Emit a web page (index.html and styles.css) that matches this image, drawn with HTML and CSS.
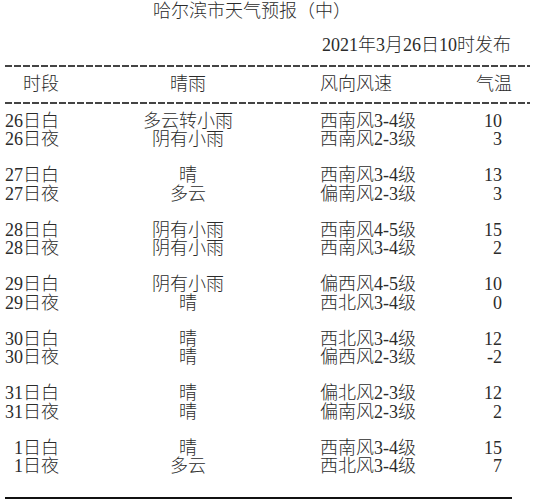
FILE: index.html
```html
<!DOCTYPE html>
<html lang="zh">
<head>
<meta charset="utf-8">
<link rel="stylesheet" href="styles.css">
</head>
<body>
<div class="sheet">
  <div class="title">哈尔滨市天气预报（中）</div>
  <div class="issued">2021年3月26日10时发布</div>
  <div class="dash"></div>
  <div class="row head">
    <span class="c1">时段</span><span class="c2">晴雨</span><span class="c3">风向风速</span><span class="c4">气温</span>
  </div>
  <div class="dash"></div>
  <div class="groups">
    <div class="group">
      <div class="row"><span class="c1">26日白</span><span class="c2">多云转小雨</span><span class="c3">西南风3-4级</span><span class="c4">10</span></div>
      <div class="row"><span class="c1">26日夜</span><span class="c2">阴有小雨</span><span class="c3">西南风2-3级</span><span class="c4">3</span></div>
    </div>
    <div class="group">
      <div class="row"><span class="c1">27日白</span><span class="c2">晴</span><span class="c3">西南风3-4级</span><span class="c4">13</span></div>
      <div class="row"><span class="c1">27日夜</span><span class="c2">多云</span><span class="c3">偏南风2-3级</span><span class="c4">3</span></div>
    </div>
    <div class="group">
      <div class="row"><span class="c1">28日白</span><span class="c2">阴有小雨</span><span class="c3">西南风4-5级</span><span class="c4">15</span></div>
      <div class="row"><span class="c1">28日夜</span><span class="c2">阴有小雨</span><span class="c3">西南风3-4级</span><span class="c4">2</span></div>
    </div>
    <div class="group">
      <div class="row"><span class="c1">29日白</span><span class="c2">阴有小雨</span><span class="c3">偏西风4-5级</span><span class="c4">10</span></div>
      <div class="row"><span class="c1">29日夜</span><span class="c2">晴</span><span class="c3">西北风3-4级</span><span class="c4">0</span></div>
    </div>
    <div class="group">
      <div class="row"><span class="c1">30日白</span><span class="c2">晴</span><span class="c3">西北风3-4级</span><span class="c4">12</span></div>
      <div class="row"><span class="c1">30日夜</span><span class="c2">晴</span><span class="c3">偏西风2-3级</span><span class="c4">-2</span></div>
    </div>
    <div class="group">
      <div class="row"><span class="c1">31日白</span><span class="c2">晴</span><span class="c3">偏北风2-3级</span><span class="c4">12</span></div>
      <div class="row"><span class="c1">31日夜</span><span class="c2">晴</span><span class="c3">偏南风2-3级</span><span class="c4">2</span></div>
    </div>
    <div class="group">
      <div class="row"><span class="c1">1日白</span><span class="c2">晴</span><span class="c3">西南风3-4级</span><span class="c4">15</span></div>
      <div class="row"><span class="c1">1日夜</span><span class="c2">多云</span><span class="c3">西北风3-4级</span><span class="c4">7</span></div>
    </div>
  </div>
  <div class="rule"></div>
</div>
</body>
</html>
```

FILE: styles.css
```css
* { box-sizing: border-box; }
html, body { margin: 0; padding: 0; background: #ffffff; }
body {
  font-family: "Liberation Serif", "Noto Sans CJK SC", serif;
  font-size: 18px;
  font-weight: 300;
  color: #2b2b2b;
}
.sheet {
  width: 533px;
  height: 500px;
  overflow: hidden;
  display: flex;
  flex-direction: column;
}
.title {
  height: 23px;
  line-height: 23px;
  padding-left: 153px;
  white-space: nowrap;
}
.issued {
  margin-top: 11px;
  height: 23px;
  line-height: 23px;
  text-align: right;
  padding-right: 22px;
  white-space: nowrap;
}
.dash {
  margin-left: 5px;
  width: 525px;
  height: 2px;
  background: repeating-linear-gradient(90deg, #444444 0 7px, transparent 7px 9px);
}
.issued + .dash { margin-top: 8px; }
.row {
  display: grid;
  grid-template-columns: 60px 256px 124px 62px;
  height: 18.2px;
  line-height: 18.2px;
  white-space: nowrap;
}
.row.head {
  height: 35px;
  line-height: 35px;
  grid-template-columns: 60px 256px 124px 72px;
}
.c1 { text-align: right; padding-right: 1px; }
.c2 { text-align: center; }
.c3 { padding-left: 4px; }
.c4 { text-align: right; }
.groups {
  margin-top: 8px;
  display: flex;
  flex-direction: column;
  gap: 18.1px;
}
.rule {
  margin-top: 22px;
  margin-left: 5px;
  width: 507px;
  height: 2px;
  background: #111111;
}
```
